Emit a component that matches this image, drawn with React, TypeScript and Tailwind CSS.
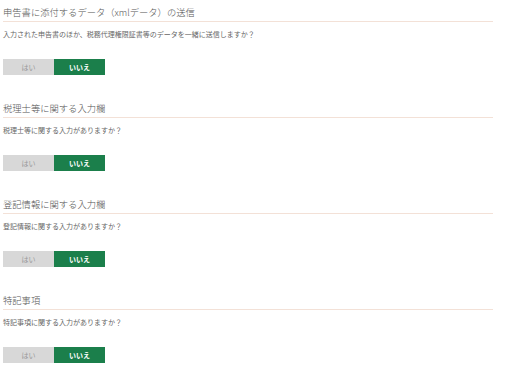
const sections = [
  {
    title: "申告書に添付するデータ（xmlデータ）の送信",
    question: "入力された申告書のほか、税務代理権限証書等のデータを一緒に送信しますか？",
  },
  { title: "税理士等に関する入力欄", question: "税理士等に関する入力がありますか？" },
  { title: "登記情報に関する入力欄", question: "登記情報に関する入力がありますか？" },
  { title: "特記事項", question: "特記事項に関する入力がありますか？" },
];

function YesNo() {
  return (
    <div className="mt-[20px] flex">
      <button className="h-[16px] w-[51px] bg-[#d8d8d8] text-[7px] leading-[16px] text-[#999]">
        はい
      </button>
      <button className="h-[16px] w-[51px] bg-[#1b7f4b] text-[7px] font-bold leading-[16px] text-white">
        いいえ
      </button>
    </div>
  );
}

export default function App() {
  return (
    <div
      className="w-[512px] bg-white pl-[3px] pr-[19px]"
      style={{ fontFamily: '"Noto Sans CJK JP", "Noto Sans", sans-serif' }}
    >
      {sections.map((s) => (
        <div key={s.title} className="h-[96px]">
          <div className="border-b border-[#f3e1d7] pt-[5px] pb-[2px] text-[9.3px] font-light leading-[14px] text-[#555]">
            {s.title}
          </div>
          <p className="mt-[7px] text-[7px] leading-[10px] text-[#666]">{s.question}</p>
          <YesNo />
        </div>
      ))}
    </div>
  );
}
